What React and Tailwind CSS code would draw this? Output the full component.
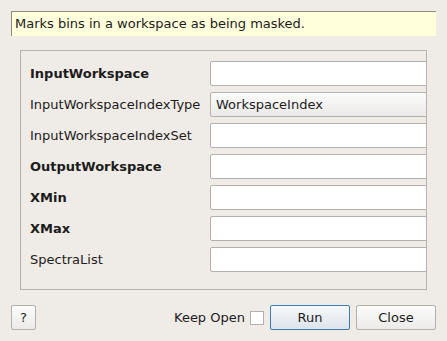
const rows = [
  { label: 'InputWorkspace', bold: true },
  { label: 'InputWorkspaceIndexType', combo: 'WorkspaceIndex' },
  { label: 'InputWorkspaceIndexSet' },
  { label: 'OutputWorkspace', bold: true },
  { label: 'XMin', bold: true },
  { label: 'XMax', bold: true },
  { label: 'SpectraList' },
]

export default function App() {
  return (
    <div
      className="relative h-[341px] w-[447px] overflow-hidden bg-[#efebe7] text-[13px] text-[#1c1c1c]"
      style={{ fontFamily: '"DejaVu Sans", sans-serif' }}
    >
      <div className="ml-[11px] mt-[11px] flex h-[25px] w-[425px] items-center border-l border-t border-[#8d8985] bg-[#ffffdc] pl-[3px]">
        Marks bins in a workspace as being masked.
      </div>

      <div className="ml-[20px] mt-[14px] h-[240px] w-[407px] overflow-hidden border border-[#b6b2ae] pl-[9px] pt-[10px]">
        <div className="flex flex-col gap-[6px]">
          {rows.map((r) => (
            <div key={r.label} className="flex h-[25px] items-center">
              <div className={`w-[180px] shrink-0 ${r.bold ? 'font-bold' : ''}`}>{r.label}</div>
              {r.combo ? (
                <div className="flex h-[25px] w-[240px] shrink-0 items-center rounded-[2px] border border-[#b4b0ac] bg-gradient-to-b from-[#fbfbfa] to-[#ebeae8] pl-[5px]">
                  {r.combo}
                </div>
              ) : (
                <div className="h-[25px] w-[240px] shrink-0 rounded-[2px] border border-[#b4b0ac] bg-white" />
              )}
            </div>
          ))}
        </div>
      </div>

      <div className="mt-[15px] flex items-center pl-[11px]">
        <button className="flex h-[25px] w-[25px] items-center justify-center rounded-[2px] border border-[#b4b0ac] bg-gradient-to-b from-[#fbfbfa] to-[#ecebe9]">
          ?
        </button>
        <div className="ml-[138px] flex items-center">
          <span>Keep Open</span>
          <span className="ml-[5px] h-[14px] w-[14px] border border-[#b4b0ac] bg-white" />
        </div>
        <button className="ml-[6px] flex h-[25px] w-[80px] items-center justify-center rounded-[2px] border border-[#3c7bb0] bg-gradient-to-b from-[#f6f8fa] to-[#dde4ea]">
          Run
        </button>
        <button className="ml-[6px] flex h-[25px] w-[80px] items-center justify-center rounded-[2px] border border-[#b4b0ac] bg-gradient-to-b from-[#fbfbfa] to-[#ecebe9]">
          Close
        </button>
      </div>
    </div>
  )
}
